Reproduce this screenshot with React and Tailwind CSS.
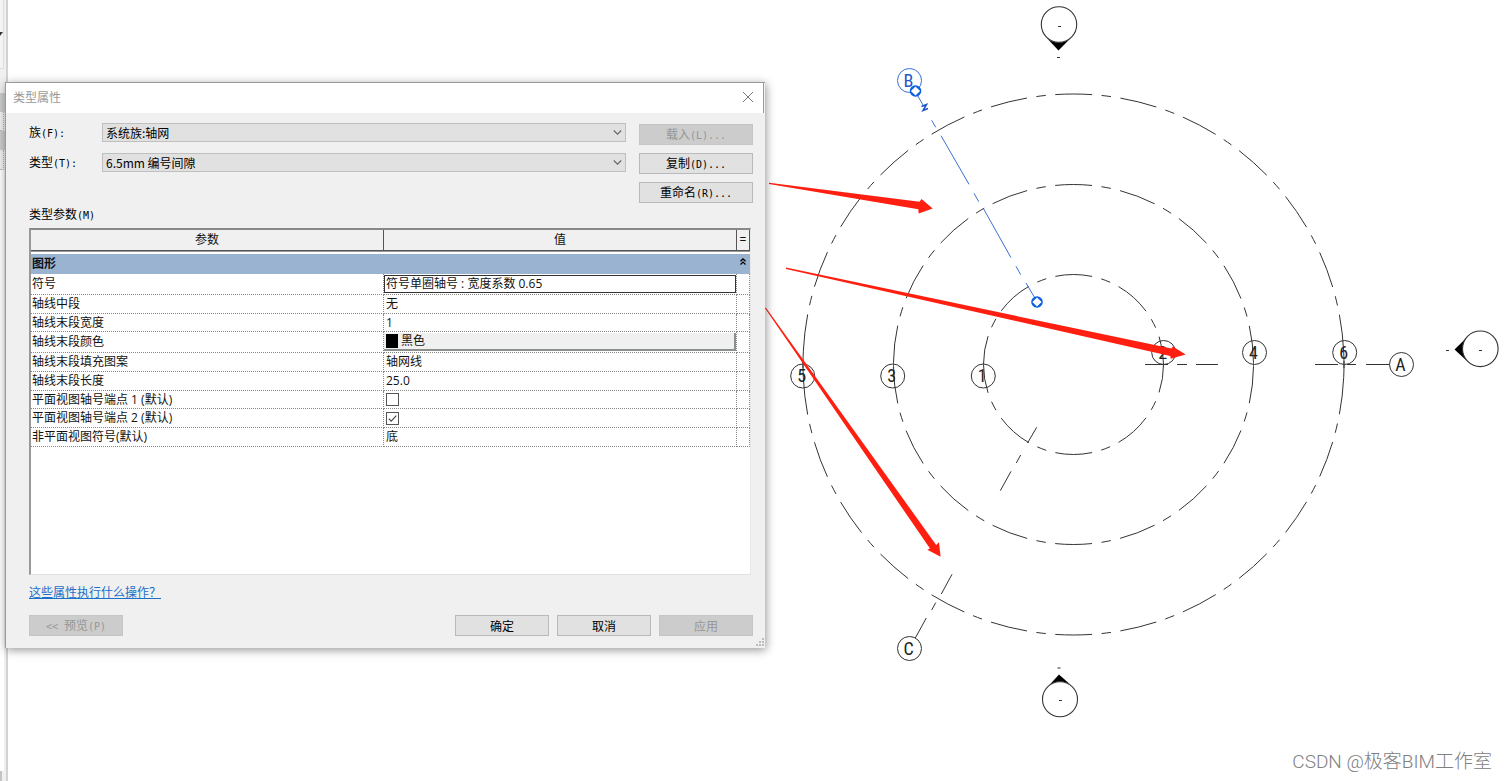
import React from "react";

const DIALOG_FONT = "font-['Noto_Sans_CJK_SC',sans-serif]";

const parameters = [
  { name: "符号", value: "符号单圈轴号 : 宽度系数 0.65", kind: "active" },
  { name: "轴线中段", value: "无" },
  { name: "轴线末段宽度", value: "1" },
  { name: "轴线末段颜色", value: "黑色", kind: "color" },
  { name: "轴线末段填充图案", value: "轴网线" },
  { name: "轴线末段长度", value: "25.0" },
  { name: "平面视图轴号端点 1 (默认)", kind: "check", checked: false },
  { name: "平面视图轴号端点 2 (默认)", kind: "check", checked: true },
  { name: "非平面视图符号(默认)", value: "底" },
];

// Sets the half-width characters of a label in a monospaced face.
function Label({ children }) {
  return children.split(/([\x20-\x7e]+)/).filter(Boolean).map((run, i) =>
    /^[\x20-\x7e]/.test(run) ? (
      <span key={i} className="whitespace-pre font-['DejaVu_Sans_Mono',monospace] text-[10px]">{run}</span>
    ) : (
      <span key={i}>{run}</span>
    )
  );
}

function Button({ children, disabled, wide }) {
  return (
    <button
      type="button"
      disabled={disabled}
      className={
        "flex h-[21px] items-center justify-center border leading-none " +
        (wide ? "w-[114px] " : "w-[94px] ") +
        (disabled
          ? "border-[#c5c5c5] bg-[#cccccc] text-[#969696]"
          : "border-[#b9b9b9] bg-[#e1e1e1] text-black")
      }
    >
      <span><Label>{children}</Label></span>
    </button>
  );
}

function Field({ id, label, value }) {
  return (
    <div className="flex h-[19px] items-center">
      <label htmlFor={id} className="w-[73px] shrink-0 leading-none"><Label>{label}</Label></label>
      <div className="relative flex-1">
        <select id={id} className="block h-[19px] w-full appearance-none border border-[#bfbfbf] bg-[#e1e1e1] px-[3px] text-xs leading-none text-black">
          <option>{value}</option>
        </select>
        <svg className="pointer-events-none absolute right-1 top-[6px] h-[7px] w-[9px]" viewBox="0 0 9 7" fill="none" stroke="#666" strokeWidth="1.1">
          <path d="M0.8 1.5 4.5 5.2 8.2 1.5" />
        </svg>
      </div>
    </div>
  );
}

function ValueCell({ row }) {
  if (row.kind === "active") {
    return <div className="flex h-[18px] items-center border border-[#333] px-px">{row.value}</div>;
  }
  if (row.kind === "color") {
    return (
      <button type="button" className="flex h-[18px] w-full items-center gap-[3px] border-b-2 border-r-2 border-[#8c908c] bg-[#f0f0f0] pl-0.5">
        <span className="h-[14px] w-3 bg-black" />
        {row.value}
      </button>
    );
  }
  if (row.kind === "check") {
    return (
      <span className="relative ml-0.5 block h-[13px] w-[13px]">
        <input type="checkbox" aria-label={row.name} defaultChecked={row.checked} className="peer block h-[13px] w-[13px] appearance-none border border-[#555] bg-white" />
        <svg className="pointer-events-none absolute left-0 top-0 hidden h-[13px] w-[13px] peer-checked:block" viewBox="0 0 13 13" fill="none" stroke="#444" strokeWidth="1.1">
          <path d="M2.8 6.6 5.2 9.2 10.3 3.6" />
        </svg>
      </span>
    );
  }
  return <div className="pl-0.5">{row.value}</div>;
}

function ParameterTable() {
  return (
    <table className="h-[217px] w-full table-fixed border-separate border-spacing-0 font-['Open_Sans','Noto_Sans_CJK_SC',sans-serif] text-xs leading-4 text-[#111]">
      <colgroup>
        <col />
        <col />
        <col className="w-[13px]" />
      </colgroup>
      <thead>
        <tr className="h-[21px] bg-[#f0f0f0]">
          <th className="h-[21px] border-b border-r border-[#555] p-0 font-normal">参数</th>
          <th className="h-[21px] border-b border-r border-[#555] p-0 font-normal">值</th>
          <th className="h-[21px] border-b border-r border-[#555] p-0 font-normal">=</th>
        </tr>
      </thead>
      <tbody>
        <tr className="h-[23px]">
          <th colSpan={3} className="h-[23px] border-t border-[#999] p-0 pt-0.5 text-left">
            <div className="flex h-5 items-center justify-between bg-[#9ab3d1] pl-px pr-1 font-bold">
              图形
              <svg className="mb-[6px] h-[7px] w-[6px]" viewBox="0 0 6 7" fill="none" stroke="#000" strokeWidth="1.3">
                <path d="M0.5 3.2 3 0.9 5.5 3.2M0.5 6.4 3 4.1 5.5 6.4" />
              </svg>
            </div>
          </th>
        </tr>
        {parameters.map((row) => (
          <tr key={row.name}>
            <td className="border-b border-r border-dotted border-[#888] p-0 pl-px">{row.name}</td>
            <td className="border-b border-r border-dotted border-[#888] p-0"><ValueCell row={row} /></td>
            <td className="border-b border-r border-dotted border-[#888] p-0" />
          </tr>
        ))}
      </tbody>
    </table>
  );
}

function TypePropertiesDialog() {
  return (
    <section
      role="dialog"
      aria-labelledby="dialog-title"
      className={"absolute left-[5px] top-[82px] w-[760px] border-l border-t border-[#9a9a9a] bg-[#f0f0f0] text-xs text-black shadow-[1px_2px_9px_rgba(0,0,0,0.42)] " + DIALOG_FONT}
    >
      <header className="mr-px flex h-[30px] items-center justify-between border-r border-[#9a9a9a] bg-white pb-0.5 pl-[7px] pr-[9px]">
        <h1 id="dialog-title" className="text-[#999]">类型属性</h1>
        <button type="button" aria-label="关闭" className="p-0">
          <svg className="h-3 w-3" viewBox="0 0 12 12" fill="none" stroke="#777" strokeWidth="1">
            <path d="M1 1 11 11M11 1 1 11" />
          </svg>
        </button>
      </header>
      <div className="pb-3 pl-[23px] pr-3">
        <div className="flex gap-[13px]">
          <div className="flex flex-1 flex-col gap-[11px] pt-[10px]">
            <Field id="family" label="族(F):" value="系统族:轴网" />
            <Field id="type" label="类型(T):" value="6.5mm 编号间隙" />
          </div>
          <div className="flex flex-col gap-2 pt-[11px]">
            <Button wide disabled>载入(L)...</Button>
            <Button wide>复制(D)...</Button>
            <Button wide>重命名(R)...</Button>
          </div>
        </div>
        <h2 className="mt-[3px] leading-4"><Label>类型参数(M)</Label></h2>
        <div className="mr-0.5 mt-1 h-[347px] border-b border-r border-b-[#e0e0e0] border-l-2 border-r-[#e8e8e8] border-t-2 border-l-[#999] border-t-[#888] bg-white">
          <ParameterTable />
        </div>
        <a href="#help" className="mt-[9px] block w-fit leading-4 text-[#1a6fc9] underline">这些属性执行什么操作？</a>
        <footer className="mt-[15px] flex gap-2">
          <Button disabled>{"<< 预览(P)"}</Button>
          <div className="flex flex-1 justify-end gap-2">
            <Button>确定</Button>
            <Button>取消</Button>
            <Button disabled>应用</Button>
          </div>
        </footer>
      </div>
      <svg className="absolute bottom-px right-px h-[9px] w-[9px]" viewBox="0 0 9 9" fill="#bbb">
        <path d="M7 0h2v2h-2zM7 3h2v2h-2zM4 3h2v2h-2zM7 6h2v2h-2zM4 6h2v2h-2zM1 6h2v2h-2z" />
      </svg>
    </section>
  );
}

const CX = 1073.5;
const CY = 364.5;
const DASH = [37, 9.5, 9.5, 9.5];
const PERIOD = 65.5;

// A grid arc: the dash pattern is centred on the arc and both ends stay solid.
function GridArc({ r, lower }) {
  const length = Math.PI * r;
  const sweep = lower ? 0 : 1;
  const d = `M${CX - r} ${CY}A${r} ${r} 0 0 ${sweep} ${CX + r} ${CY}`;
  const first = (length / 2 - 18.5) % PERIOD;
  const open = first < PERIOD - DASH[0];
  return (
    <g>
      <path d={d} strokeDasharray={DASH.join(" ")} strokeDashoffset={18.5 - length / 2} />
      {open && <path d={d} strokeDasharray={`${first} ${length - 2 * first} ${first} 1`} />}
    </g>
  );
}

function Bubble({ x, y, text, blue }) {
  return (
    <g>
      <circle cx={x} cy={y} r="12" stroke={blue ? "#3b6fd8" : "#333"} />
      <text x={x - 1} y={y + 6} textAnchor="middle" stroke="none" fill={blue ? "#2458cc" : "#222"} className="font-['Roboto_Condensed','Open_Sans_Condensed','Liberation_Sans',sans-serif] text-[18px]">
        {text}
      </text>
    </g>
  );
}

function Grip({ x, y }) {
  return (
    <g stroke="none">
      <circle cx={x} cy={y} r="5.8" fill="#0b5fe0" />
      <path fill="#fff" d={`M${x - 4.6} ${y}L${x} ${y - 4.6}L${x + 4.6} ${y}L${x} ${y + 4.6}Z`} />
    </g>
  );
}

function Drawing() {
  return (
    <svg className="block h-auto w-full" viewBox="8 0 1498 781" fill="none" stroke="#333" strokeWidth="1" role="img" aria-label="轴网平面图">
      {[90, 180, 270.5].map((r) => (
        <g key={r}>
          <GridArc r={r} />
          <GridArc r={r} lower />
        </g>
      ))}
      <path d="M1145 364.5H1168M1177 364.5H1187M1196 364.5H1218M1315 364.5H1338M1347 364.5H1356M1366 364.5H1389.5" />
      <path d="M1036.7 427.3 1027.5 443M1020.7 455 1016.3 463M1011 471.3 1000.3 490.7M952 574.3 941.3 594M935.7 602.7 931.7 610M926.3 618 915.3 638" />
      <path stroke="#3b6fd8" d="M916.7 94 923 105M931.7 120.3 935.7 127.3M941 135.7 969 184.3M974 193.3 978.7 201.7M983.7 209 1011 257.7M1016 266.3 1020.7 274.7M1026 283 1036 300" />
      <path stroke="#1a50cc" strokeWidth="1.5" d="M921.5 106.5 926.5 104.5 923 110.5 928 108.5" />

      <Bubble x={802.7} y={376} text="5" />
      <Bubble x={892.7} y={376} text="3" />
      <Bubble x={983.3} y={376} text="1" />
      <Bubble x={1163.7} y={352.5} text="2" />
      <Bubble x={1254.5} y={352.5} text="4" />
      <Bubble x={1344.7} y={352.5} text="6" />
      <Bubble x={1401.5} y={364.5} text="A" />
      <Bubble x={909.5} y={648.5} text="C" />
      <Bubble x={909.5} y={80.5} text="B" blue />
      <Grip x={915.5} y={91} />
      <Grip x={1037} y={302} />

      <g strokeWidth="1.1">
        <path fill="#000" stroke="none" d="M1046 37.2 1058.5 50.5 1071.5 37.2A17.7 17.7 0 0 1 1046 37.2Z" />
        <circle cx="1059" cy="24.5" r="17.7" />
        <path fill="#000" stroke="none" d="M1048 686.5 1059 674.5 1073 687A17.7 17.7 0 0 0 1048 686.5Z" />
        <circle cx="1060" cy="699.3" r="17.5" />
        <path fill="#000" stroke="none" d="M1468.3 336 1454.5 349.5 1468.3 362.3A18 18 0 0 1 1468.3 336Z" />
        <circle cx="1480.3" cy="348.8" r="17.8" />
        <path d="M1058 26.5h3M1057 57.5h3M1057.5 668h3M1059 700.5h3M1446 350.5h3M1479 350.5h3" />
      </g>

      <g fill="#ff1f10" stroke="none">
        <path d="M769 182.7 919.5 201.8 921.5 199 932.7 208.5 918.7 213.5 918.3 209.3 769 184Z" />
        <path d="M786 267.6 1171.5 348.6 1172.7 346.5 1185.7 354.4 1170.7 358.8 1170.2 356 786 269Z" />
        <path d="M765.8 307.4 936.2 545 939 542.3 940.6 556.8 927.3 549.8 930 548.6 765 308.2Z" />
      </g>
    </svg>
  );
}

function DockedPanelEdge() {
  return (
    <aside className="flex w-2 shrink-0 flex-col border-r-2 border-[#d2d2d2] bg-[#f0f0f0]">
      <div className="mr-0.5 flex h-[69px] items-center border-b border-r border-[#ddd] bg-[#f4f4f4]">
        <svg className="h-1 w-[3px]" viewBox="0 0 3 4" fill="#333"><path d="M0 0h3L0 4z" /></svg>
      </div>
      <div className="mt-6 h-[19px] bg-[#ccc]" />
      <div className="mr-0.5 h-[19px] border-b border-r border-dotted border-[#bbb]" />
      <div className="h-[19px] bg-[#ccc]" />
      <div className="mr-0.5 h-5 border-b border-r border-dotted border-[#bbb]" />
      <div className="mr-0.5 flex-1 bg-white" />
      <div className="mr-1 h-[10px] border-r-2 border-[#c4c4c4] bg-[#ccc]" />
    </aside>
  );
}

export default function App() {
  return (
    <main className="relative flex min-h-screen overflow-hidden bg-white">
      <DockedPanelEdge />
      <div className="min-w-0 flex-1">
        <Drawing />
      </div>
      <TypePropertiesDialog />
      <p className="absolute bottom-1 right-[14px] font-['Roboto','Noto_Sans_CJK_SC',sans-serif] text-[19px] font-light leading-[30px] text-[#808080]">
        CSDN @极客BIM工作室
      </p>
    </main>
  );
}
